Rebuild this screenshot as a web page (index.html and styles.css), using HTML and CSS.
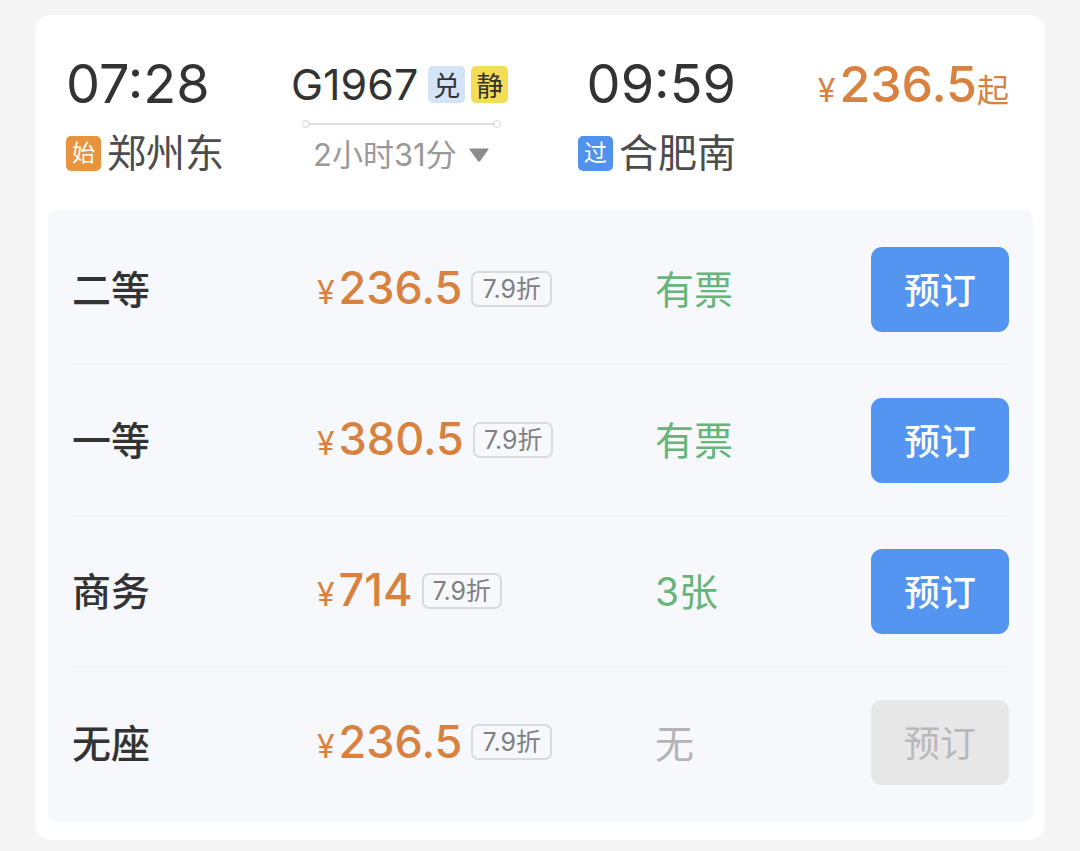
FILE: index.html
```html
<!DOCTYPE html>
<html lang="zh-CN">
<head>
    <meta charset="UTF-8">
    <meta name="viewport" content="width=device-width, initial-scale=1.0">
    <title>G1967 郑州东 - 合肥南</title>
    <link rel="stylesheet" href="styles.css">
</head>
<body>
    <main class="card">
        <header class="trip">
            <div class="depart">
                <div class="time">07:28</div>
                <div class="station"><span class="mark mark-start">始</span>郑州东</div>
            </div>
            <div class="train">
                <div class="train-no">G1967<span class="tag tag-blue">兑</span><span class="tag tag-yellow">静</span></div>
                <div class="route-line"></div>
                <button type="button" class="duration">2小时31分
                    <svg class="arrow" viewBox="0 0 20 14"><path d="M1 0.5h18q1 0 .4.9l-8.2 11.6q-1.2 1.4-2.4 0L.6 1.4Q0 .5 1 .5z" fill="currentColor"/></svg>
                </button>
            </div>
            <div class="arrive">
                <div class="time">09:59</div>
                <div class="station"><span class="mark mark-pass">过</span>合肥南</div>
            </div>
            <div class="from-price"><span class="yen">¥</span>236.5<span class="from">起</span></div>
        </header>

        <ul class="seats">
            <li class="seat">
                <span class="seat-name">二等</span>
                <span class="price"><span class="yen">¥</span>236.5<span class="discount">7.9折</span></span>
                <span class="stock">有票</span>
                <button type="button" class="book">预订</button>
            </li>
            <li class="seat">
                <span class="seat-name">一等</span>
                <span class="price"><span class="yen">¥</span>380.5<span class="discount">7.9折</span></span>
                <span class="stock">有票</span>
                <button type="button" class="book">预订</button>
            </li>
            <li class="seat">
                <span class="seat-name">商务</span>
                <span class="price"><span class="yen">¥</span>714<span class="discount">7.9折</span></span>
                <span class="stock">3张</span>
                <button type="button" class="book">预订</button>
            </li>
            <li class="seat">
                <span class="seat-name">无座</span>
                <span class="price"><span class="yen">¥</span>236.5<span class="discount">7.9折</span></span>
                <span class="stock none">无</span>
                <button type="button" class="book" disabled>预订</button>
            </li>
        </ul>
    </main>
</body>
</html>
```
FILE: styles.css
```css
* {
    box-sizing: border-box;
}
body {
    margin: 0;
    padding: 15px 35px 11px;
    background-color: #f5f5f5;
    color: #333;
    font-family: Inter, "Noto Sans CJK SC", sans-serif;
}
button {
    border: none;
    margin: 0;
    font-family: inherit;
    cursor: pointer;
}
.card {
    background: white;
    border-radius: 16px;
    padding: 0 12px 18px 13px;
}

/* trip summary */
.trip {
    display: grid;
    grid-template-columns: 225fr 286fr 159fr 273fr;
    padding: 39px 24px 31px 18px;
}
.time {
    font-size: 54px;
    line-height: 60px;
}
.station {
    display: flex;
    align-items: center;
    gap: 6px;
    margin-top: 15px;
    font-size: 39px;
    line-height: 48px;
    color: #4c4c4c;
    white-space: nowrap;
}
.arrive {
    display: flex;
    flex-direction: column;
    align-items: flex-end;
}
.mark {
    width: 35px;
    height: 35px;
    border-radius: 5px;
    color: white;
    font-size: 23px;
    line-height: 35px;
    text-align: center;
}
.mark-start {
    background-color: #e8943f;
}
.mark-pass {
    background-color: #4f93ee;
}
.train {
    justify-self: start;
}
.train-no {
    display: flex;
    align-items: center;
    gap: 6px;
    font-size: 43px;
    line-height: 60px;
}
.tag {
    width: 37px;
    height: 37px;
    border-radius: 5px;
    font-size: 27px;
    line-height: 41px;
    text-align: center;
}
.tag-blue {
    margin-left: 4px;
    background-color: #d5e3f6;
}
.tag-yellow {
    background-color: #f5dc55;
}
.route-line {
    display: flex;
    align-items: center;
    justify-content: space-between;
    height: 6px;
    margin: 7px 7px 4px 11px;
    background: linear-gradient(#e0e0e0, #e0e0e0) center / calc(100% - 12px) 2px no-repeat;
}
.route-line::before,
.route-line::after {
    content: "";
    width: 6px;
    height: 6px;
    border: 1px solid #d8d8d8;
    border-radius: 50%;
}
.duration {
    display: flex;
    align-items: center;
    gap: 12px;
    padding: 0 0 0 22px;
    background: none;
    color: #999;
    font-size: 31px;
    line-height: 48px;
}
.arrow {
    width: 20px;
    height: 14px;
    color: #8c8c8c;
}
.from-price {
    justify-self: end;
    color: #d9823f;
    font-size: 50px;
    font-weight: 500;
    line-height: 60px;
    white-space: nowrap;
}
.yen {
    margin-right: 4px;
    font-size: 32px;
    font-weight: 400;
}
.from {
    font-size: 32px;
    font-weight: 400;
}

/* seat list */
.seats {
    list-style: none;
    margin: 0;
    padding: 4px 24px;
    background-color: #f6f8fc;
    border-radius: 10px;
}
.seat {
    display: grid;
    grid-template-columns: 245fr 338fr 216fr 138px;
    align-items: center;
    height: 151px;
    border-bottom: 1px solid #eeeff2;
}
.seat:last-child {
    border-bottom: none;
}
.seat-name,
.stock {
    padding-bottom: 4px;
    font-size: 39px;
}
.seat-name {
    font-weight: 500;
}
.price {
    display: flex;
    align-items: baseline;
    padding-top: 3px;
    color: #d9823f;
    font-size: 45px;
    font-weight: 500;
    line-height: 60px;
}
.discount {
    align-self: center;
    height: 36px;
    margin: 0 0 4px 9px;
    padding: 0 9px;
    border: 2px solid #d9dadd;
    border-radius: 7px;
    color: #808080;
    font-size: 25px;
    font-weight: 400;
    line-height: 32px;
}
.stock {
    color: #67b57b;
}
.stock.none {
    color: #b3b4b8;
}
.book {
    height: 85px;
    padding: 0 0 3px;
    border-radius: 11px;
    background-color: #5495f1;
    color: white;
    font-size: 36px;
    font-weight: 500;
}
.book:disabled {
    background-color: #e7e7e7;
    color: #b9b9b9;
    font-weight: 400;
    cursor: default;
}
```
